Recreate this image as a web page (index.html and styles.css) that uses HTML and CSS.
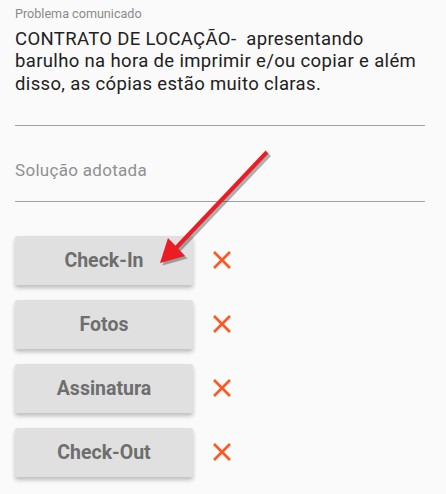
FILE: index.html
```html
<!DOCTYPE html>
<html lang="pt">
<head>
    <meta charset="UTF-8">
    <meta name="viewport" content="width=device-width, initial-scale=1.0">
    <title>Chamado</title>
    <link rel="stylesheet" href="styles.css">
</head>
<body>

    <div class="form">
        <div class="field">
            <label class="field-label">Problema comunicado</label>
            <div class="field-value">CONTRATO DE LOCAÇÃO-&nbsp; apresentando barulho na hora de imprimir e/ou copiar e além disso, as cópias estão muito claras.</div>
        </div>

        <div class="field field-empty">
            <div class="placeholder">Solução adotada</div>
        </div>

        <div class="actions">
            <div class="action-row">
                <button class="action-button">Check-In</button>
                <svg class="status-icon" viewBox="0 0 20 20"><path d="M2 2 L18 18 M18 2 L2 18"/></svg>
            </div>
            <div class="action-row">
                <button class="action-button">Fotos</button>
                <svg class="status-icon" viewBox="0 0 20 20"><path d="M2 2 L18 18 M18 2 L2 18"/></svg>
            </div>
            <div class="action-row">
                <button class="action-button">Assinatura</button>
                <svg class="status-icon" viewBox="0 0 20 20"><path d="M2 2 L18 18 M18 2 L2 18"/></svg>
            </div>
            <div class="action-row">
                <button class="action-button">Check-Out</button>
                <svg class="status-icon" viewBox="0 0 20 20"><path d="M2 2 L18 18 M18 2 L2 18"/></svg>
            </div>
        </div>
    </div>

    <!-- seta de anotação por cima do botão -->
    <svg class="annotation" width="446" height="494" viewBox="0 0 446 494">
        <g class="arrow-shadow" transform="translate(2.5 2.5)">
            <line x1="267" y1="152" x2="176" y2="248"/>
            <polygon points="160,263 168,238 185,256"/>
        </g>
        <g class="arrow">
            <line x1="267" y1="152" x2="176" y2="248"/>
            <polygon points="160,263 168,238 185,256"/>
        </g>
    </svg>

</body>
</html>
```

FILE: styles.css
```css
body {
    font-family: Roboto, 'Noto Sans', sans-serif;
    background-color: #fafafa;
    margin: 0;
    padding: 0;
}

.form {
    padding: 6px 21px 0 15px;
}

.field {
    border-bottom: 1px solid #a0a0a0;
    padding-bottom: 30px;
}

.field-label {
    display: block;
    font-size: 12.6px;
    line-height: 16px;
    color: #8a8a8a;
}

.field-value {
    font-size: 18.5px;
    letter-spacing: 0.35px;
    line-height: 22.3px;
    color: #212121;
    margin-top: 6px;
}

.field-empty {
    padding-top: 33px;
    padding-bottom: 20px;
}

.placeholder {
    font-size: 17px;
    letter-spacing: 0.3px;
    line-height: 22px;
    color: #909090;
}

.actions {
    padding-top: 34px;
}

.action-row {
    display: flex;
    align-items: center;
    margin-bottom: 15px;
}

.action-button {
    width: 178px;
    height: 49px;
    border: none;
    border-radius: 2px;
    background-color: #e0e0e0;
    color: #6e6e6e;
    font-family: Roboto, sans-serif;
    font-weight: bold;
    font-size: 19.5px;
    box-shadow: 0 3px 4px rgba(0, 0, 0, 0.25);
    margin-right: 19px;
    padding: 0;
}

.status-icon {
    width: 20px;
    height: 20px;
}

.status-icon path {
    stroke: #ff5722;
    stroke-width: 2.6;
    fill: none;
}

.annotation {
    position: absolute;
    top: 0;
    left: 0;
    pointer-events: none;
}

.arrow line {
    stroke: #ec1c24;
    stroke-width: 4;
}

.arrow polygon {
    fill: #ec1c24;
}

.arrow-shadow line {
    stroke: rgba(0, 0, 0, 0.3);
    stroke-width: 4;
}

.arrow-shadow polygon {
    fill: rgba(0, 0, 0, 0.3);
}
```
